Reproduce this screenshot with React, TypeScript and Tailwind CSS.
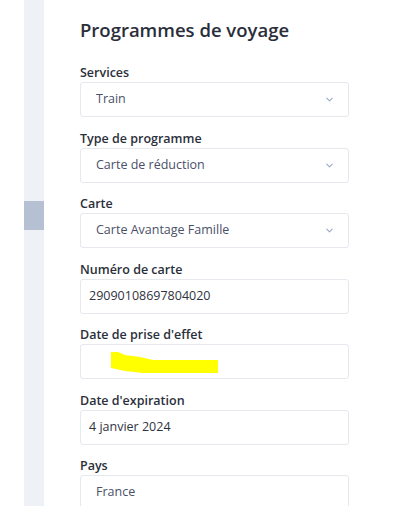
import { ChevronDown } from 'lucide-react';

const FONT = { fontFamily: '"Open Sans", Lato, Arial, sans-serif' };

function Label({ children }: { children: string }) {
  return (
    <div className="h-[19px] text-[12.5px] font-semibold leading-[19px] text-[#2b2f3a]">
      {children}
    </div>
  );
}

function SelectBox({ value, chevron = true }: { value: string; chevron?: boolean }) {
  return (
    <div className="flex h-[35px] shrink-0 items-center justify-between rounded-[3px] border border-[#e6e8ee] bg-white pl-[15px] pr-[13px]">
      <span className="text-[12.5px] text-[#4a5068]">{value}</span>
      {chevron && <ChevronDown size={11} strokeWidth={2.2} className="text-[#9aa6c2]" />}
    </div>
  );
}

function TextBox({ value, children }: { value?: string; children?: React.ReactNode }) {
  return (
    <div className="relative flex h-[35px] shrink-0 items-center rounded-[3px] border border-[#e6e8ee] bg-white pl-[8px]">
      {value && <span className="text-[12.5px] text-[#2f3340]">{value}</span>}
      {children}
    </div>
  );
}

function Field({ label, children }: { label: string; children: React.ReactNode }) {
  return (
    <div className="flex shrink-0 flex-col">
      <Label>{label}</Label>
      {children}
    </div>
  );
}

export default function App() {
  return (
    <div className="flex h-[506px] w-[405px] overflow-hidden bg-white" style={FONT}>
      <div className="w-[24px] shrink-0 bg-white" />
      <div className="flex w-[20px] shrink-0 flex-col bg-[#eef1f6]">
        <div className="h-[201px]" />
        <div className="h-[29px] bg-[#b5c1d3]" />
      </div>
      <div className="flex w-[305px] flex-col pl-[36px] pt-[18px]">
        <h1 className="mb-[21px] shrink-0 text-[18.5px] font-semibold leading-[24px] text-[#2a2e3a]">
          Programmes de voyage
        </h1>
        <div className="flex flex-col gap-[11.5px]">
          <Field label="Services">
            <SelectBox value="Train" />
          </Field>
          <Field label="Type de programme">
            <SelectBox value="Carte de réduction" />
          </Field>
          <Field label="Carte">
            <SelectBox value="Carte Avantage Famille" />
          </Field>
          <Field label="Numéro de carte">
            <TextBox value="29090108697804020" />
          </Field>
          <Field label="Date de prise d'effet">
            <TextBox>
              <svg className="absolute left-[30px] top-[6px]" width="108" height="23" viewBox="0 0 108 23">
                <polygon
                  points="0,1 7,1 14,4 29,6 42,9 107,9 107,22 32,22 14,20 0,17"
                  fill="#ffff00"
                />
              </svg>
            </TextBox>
          </Field>
          <Field label="Date d'expiration">
            <TextBox value="4 janvier 2024" />
          </Field>
          <Field label="Pays">
            <SelectBox value="France" chevron={false} />
          </Field>
        </div>
      </div>
    </div>
  );
}
